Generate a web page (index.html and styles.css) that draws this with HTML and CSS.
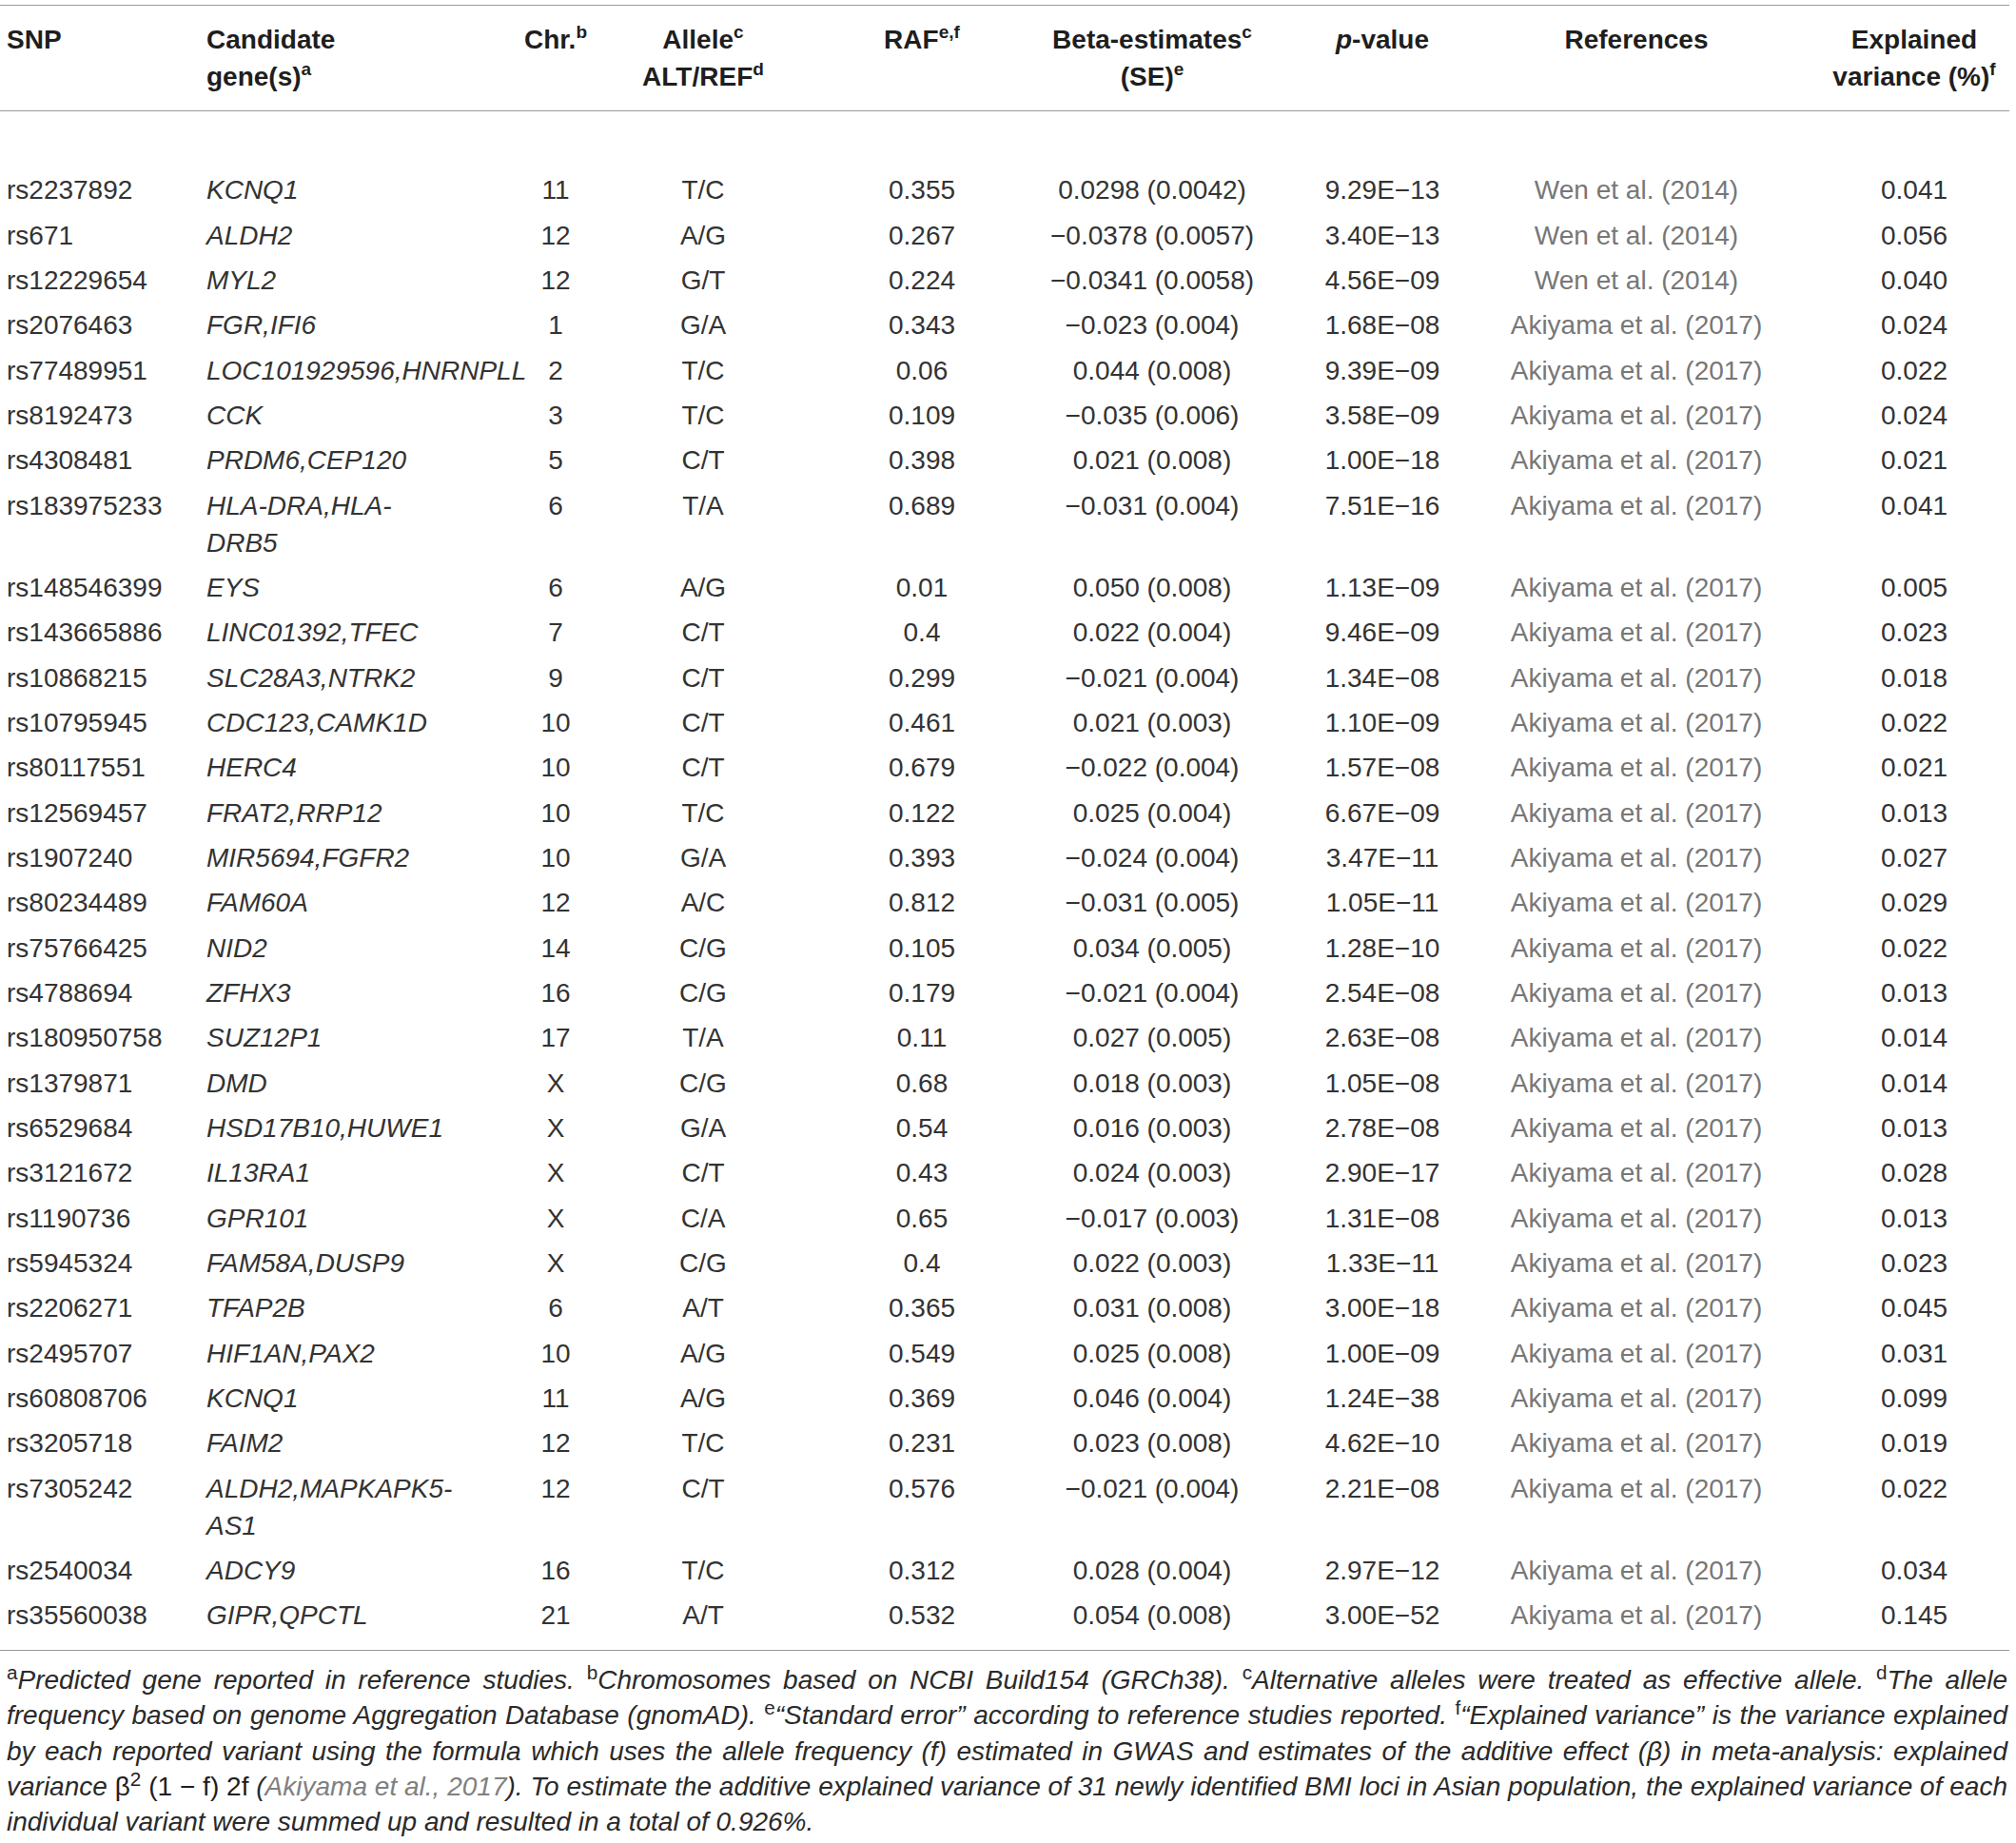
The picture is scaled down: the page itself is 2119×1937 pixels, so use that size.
FILE: index.html
```html
<!DOCTYPE html>
<html lang="en">
<head>
<meta charset="utf-8">
<title>Table</title>
<link rel="stylesheet" href="styles.css">
</head>
<body>
<div class="page">
<table class="snp">
<colgroup>
<col class="w1"><col class="w2"><col class="w3"><col class="w4"><col class="w5"><col class="w6"><col class="w7"><col class="w8"><col class="w9">
</colgroup>
<thead>
<tr>
<th>SNP</th>
<th>Candidate<br>gene(s)<sup>a</sup></th>
<th>Chr.<sup>b</sup></th>
<th>Allele<sup>c</sup><br>ALT/REF<sup>d</sup></th>
<th>RAF<sup>e,f</sup></th>
<th>Beta-estimates<sup>c</sup><br>(SE)<sup>e</sup></th>
<th><i>p</i>-value</th>
<th>References</th>
<th>Explained<br>variance (%)<sup>f</sup></th>
</tr>
</thead>
<tbody>
<tr class="spacer"><td colspan="9"></td></tr>
<tr><td>rs2237892</td><td>KCNQ1</td><td>11</td><td>T/C</td><td>0.355</td><td>0.0298 (0.0042)</td><td>9.29E−13</td><td>Wen et al. (2014)</td><td>0.041</td></tr>
<tr><td>rs671</td><td>ALDH2</td><td>12</td><td>A/G</td><td>0.267</td><td>−0.0378 (0.0057)</td><td>3.40E−13</td><td>Wen et al. (2014)</td><td>0.056</td></tr>
<tr><td>rs12229654</td><td>MYL2</td><td>12</td><td>G/T</td><td>0.224</td><td>−0.0341 (0.0058)</td><td>4.56E−09</td><td>Wen et al. (2014)</td><td>0.040</td></tr>
<tr><td>rs2076463</td><td>FGR,IFI6</td><td>1</td><td>G/A</td><td>0.343</td><td>−0.023 (0.004)</td><td>1.68E−08</td><td>Akiyama et al. (2017)</td><td>0.024</td></tr>
<tr><td>rs77489951</td><td>LOC101929596,HNRNPLL</td><td>2</td><td>T/C</td><td>0.06</td><td>0.044 (0.008)</td><td>9.39E−09</td><td>Akiyama et al. (2017)</td><td>0.022</td></tr>
<tr><td>rs8192473</td><td>CCK</td><td>3</td><td>T/C</td><td>0.109</td><td>−0.035 (0.006)</td><td>3.58E−09</td><td>Akiyama et al. (2017)</td><td>0.024</td></tr>
<tr><td>rs4308481</td><td>PRDM6,CEP120</td><td>5</td><td>C/T</td><td>0.398</td><td>0.021 (0.008)</td><td>1.00E−18</td><td>Akiyama et al. (2017)</td><td>0.021</td></tr>
<tr><td>rs183975233</td><td>HLA-DRA,HLA-DRB5</td><td>6</td><td>T/A</td><td>0.689</td><td>−0.031 (0.004)</td><td>7.51E−16</td><td>Akiyama et al. (2017)</td><td>0.041</td></tr>
<tr><td>rs148546399</td><td>EYS</td><td>6</td><td>A/G</td><td>0.01</td><td>0.050 (0.008)</td><td>1.13E−09</td><td>Akiyama et al. (2017)</td><td>0.005</td></tr>
<tr><td>rs143665886</td><td>LINC01392,TFEC</td><td>7</td><td>C/T</td><td>0.4</td><td>0.022 (0.004)</td><td>9.46E−09</td><td>Akiyama et al. (2017)</td><td>0.023</td></tr>
<tr><td>rs10868215</td><td>SLC28A3,NTRK2</td><td>9</td><td>C/T</td><td>0.299</td><td>−0.021 (0.004)</td><td>1.34E−08</td><td>Akiyama et al. (2017)</td><td>0.018</td></tr>
<tr><td>rs10795945</td><td>CDC123,CAMK1D</td><td>10</td><td>C/T</td><td>0.461</td><td>0.021 (0.003)</td><td>1.10E−09</td><td>Akiyama et al. (2017)</td><td>0.022</td></tr>
<tr><td>rs80117551</td><td>HERC4</td><td>10</td><td>C/T</td><td>0.679</td><td>−0.022 (0.004)</td><td>1.57E−08</td><td>Akiyama et al. (2017)</td><td>0.021</td></tr>
<tr><td>rs12569457</td><td>FRAT2,RRP12</td><td>10</td><td>T/C</td><td>0.122</td><td>0.025 (0.004)</td><td>6.67E−09</td><td>Akiyama et al. (2017)</td><td>0.013</td></tr>
<tr><td>rs1907240</td><td>MIR5694,FGFR2</td><td>10</td><td>G/A</td><td>0.393</td><td>−0.024 (0.004)</td><td>3.47E−11</td><td>Akiyama et al. (2017)</td><td>0.027</td></tr>
<tr><td>rs80234489</td><td>FAM60A</td><td>12</td><td>A/C</td><td>0.812</td><td>−0.031 (0.005)</td><td>1.05E−11</td><td>Akiyama et al. (2017)</td><td>0.029</td></tr>
<tr><td>rs75766425</td><td>NID2</td><td>14</td><td>C/G</td><td>0.105</td><td>0.034 (0.005)</td><td>1.28E−10</td><td>Akiyama et al. (2017)</td><td>0.022</td></tr>
<tr><td>rs4788694</td><td>ZFHX3</td><td>16</td><td>C/G</td><td>0.179</td><td>−0.021 (0.004)</td><td>2.54E−08</td><td>Akiyama et al. (2017)</td><td>0.013</td></tr>
<tr><td>rs180950758</td><td>SUZ12P1</td><td>17</td><td>T/A</td><td>0.11</td><td>0.027 (0.005)</td><td>2.63E−08</td><td>Akiyama et al. (2017)</td><td>0.014</td></tr>
<tr><td>rs1379871</td><td>DMD</td><td>X</td><td>C/G</td><td>0.68</td><td>0.018 (0.003)</td><td>1.05E−08</td><td>Akiyama et al. (2017)</td><td>0.014</td></tr>
<tr><td>rs6529684</td><td>HSD17B10,HUWE1</td><td>X</td><td>G/A</td><td>0.54</td><td>0.016 (0.003)</td><td>2.78E−08</td><td>Akiyama et al. (2017)</td><td>0.013</td></tr>
<tr><td>rs3121672</td><td>IL13RA1</td><td>X</td><td>C/T</td><td>0.43</td><td>0.024 (0.003)</td><td>2.90E−17</td><td>Akiyama et al. (2017)</td><td>0.028</td></tr>
<tr><td>rs1190736</td><td>GPR101</td><td>X</td><td>C/A</td><td>0.65</td><td>−0.017 (0.003)</td><td>1.31E−08</td><td>Akiyama et al. (2017)</td><td>0.013</td></tr>
<tr><td>rs5945324</td><td>FAM58A,DUSP9</td><td>X</td><td>C/G</td><td>0.4</td><td>0.022 (0.003)</td><td>1.33E−11</td><td>Akiyama et al. (2017)</td><td>0.023</td></tr>
<tr><td>rs2206271</td><td>TFAP2B</td><td>6</td><td>A/T</td><td>0.365</td><td>0.031 (0.008)</td><td>3.00E−18</td><td>Akiyama et al. (2017)</td><td>0.045</td></tr>
<tr><td>rs2495707</td><td>HIF1AN,PAX2</td><td>10</td><td>A/G</td><td>0.549</td><td>0.025 (0.008)</td><td>1.00E−09</td><td>Akiyama et al. (2017)</td><td>0.031</td></tr>
<tr><td>rs60808706</td><td>KCNQ1</td><td>11</td><td>A/G</td><td>0.369</td><td>0.046 (0.004)</td><td>1.24E−38</td><td>Akiyama et al. (2017)</td><td>0.099</td></tr>
<tr><td>rs3205718</td><td>FAIM2</td><td>12</td><td>T/C</td><td>0.231</td><td>0.023 (0.008)</td><td>4.62E−10</td><td>Akiyama et al. (2017)</td><td>0.019</td></tr>
<tr><td>rs7305242</td><td>ALDH2,MAPKAPK5-AS1</td><td>12</td><td>C/T</td><td>0.576</td><td>−0.021 (0.004)</td><td>2.21E−08</td><td>Akiyama et al. (2017)</td><td>0.022</td></tr>
<tr><td>rs2540034</td><td>ADCY9</td><td>16</td><td>T/C</td><td>0.312</td><td>0.028 (0.004)</td><td>2.97E−12</td><td>Akiyama et al. (2017)</td><td>0.034</td></tr>
<tr class="last"><td>rs35560038</td><td>GIPR,QPCTL</td><td>21</td><td>A/T</td><td>0.532</td><td>0.054 (0.008)</td><td>3.00E−52</td><td>Akiyama et al. (2017)</td><td>0.145</td></tr>
</tbody>
</table>
<p class="notes"><sup>a</sup>Predicted gene reported in reference studies. <sup>b</sup>Chromosomes based on NCBI Build154 (GRCh38). <sup>c</sup>Alternative alleles were treated as effective allele. <sup>d</sup>The allele frequency based on genome Aggregation Database (gnomAD). <sup>e</sup>“Standard error” according to reference studies reported. <sup>f</sup>“Explained variance” is the variance explained by each reported variant using the formula which uses the allele frequency (f) estimated in GWAS and estimates of the additive effect (β) in meta-analysis: explained variance <span class="up">β<sup>2</sup> (1 − f) 2f</span> (<span class="ref">Akiyama et al., 2017</span>). To estimate the additive explained variance of 31 newly identified BMI loci in Asian population, the explained variance of each individual variant were summed up and resulted in a total of 0.926%.</p>
</div>
</body>
</html>
```

FILE: styles.css
```css
html, body {
  margin: 0;
  padding: 0;
  background: #ffffff;
}

body {
  font-family: "Liberation Sans", Arial, Helvetica, sans-serif;
  color: #333333;
}

.page {
  width: 2112px;
  padding-top: 5px;
}

.snp {
  width: 2112px;
  table-layout: fixed;
  border-collapse: separate;
  border-spacing: 0;
  font-size: 28px;
  line-height: 39px;
}

.w1 { width: 210px; }
.w2 { width: 290px; }
.w3 { width: 161px; }
.w4 { width: 193px; }
.w5 { width: 236px; }
.w6 { width: 242px; }
.w7 { width: 254px; }
.w8 { width: 280px; }
.w9 { width: 246px; }

.snp th {
  font-weight: bold;
  color: #1e1e1e;
  text-align: center;
  vertical-align: top;
  padding: 16px 0;
  border-top: 1px solid #9a9a9a;
  border-bottom: 1px solid #9a9a9a;
}

.snp td {
  text-align: center;
  vertical-align: top;
  padding: 4.18px 0;
  white-space: normal;
}

.snp tr > :nth-child(1) {
  text-align: left;
  padding-left: 7px;
}

.snp tr > :nth-child(2) {
  text-align: left;
  padding-left: 7px;
  padding-right: 20px;
}

.snp tr > :nth-child(3) { padding-left: 7px; }
.snp tr > :nth-child(4) { padding-right: 37px; }
.snp tr > :nth-child(5) { padding-right: 6px; }
.snp tr > :nth-child(7) { padding-right: 12px; }
.snp tr > :nth-child(8) { padding-right: 12px; }
.snp tr > :nth-child(9) { padding-left: 46px; }

.snp td:nth-child(2) {
  font-style: italic;
}

.snp td:nth-child(8) {
  color: #777777;
}

.snp tr.spacer td {
  height: 59px;
  padding: 0;
}

.snp tr.last td {
  padding-bottom: 16.5px;
  border-bottom: 1px solid #9a9a9a;
}

.snp sup {
  font-size: 0.68em;
  line-height: 0;
  vertical-align: 0.6em;
}

.notes {
  margin: 0;
  padding: 12px 2px 0 7px;
  font-size: 28px;
  line-height: 37.3px;
  font-style: italic;
  text-align: justify;
  color: #2a2a2a;
}

.notes sup {
  font-style: normal;
  font-size: 0.74em;
  line-height: 0;
  vertical-align: 0.5em;
}

.notes .up {
  font-style: normal;
  color: #1e1e1e;
}

.notes .ref {
  color: #808080;
}
```
